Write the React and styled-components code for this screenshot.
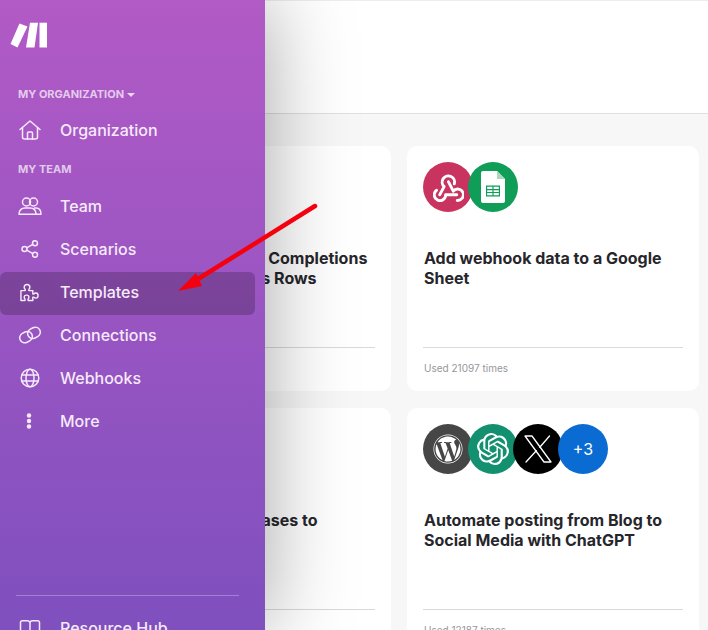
import React from 'react';
import styled, { createGlobalStyle } from 'styled-components';
import { FaWordpress } from 'react-icons/fa6';
import { SiOpenai } from 'react-icons/si';

const Global = createGlobalStyle`
  html, body { margin: 0; padding: 0; height: 100%; overflow: hidden; background: #f7f7f7; }
  * { box-sizing: border-box; }
  body { font-family: Inter, "Liberation Sans", sans-serif; }
`;

const Page = styled.div`
  position: relative;
  width: 708px;
  height: 630px;
  overflow: hidden;
  background: #f7f7f7;
`;

const Sidebar = styled.aside`
  position: absolute;
  left: 0;
  top: 0;
  bottom: 0;
  width: 265px;
  z-index: 2;
  display: flex;
  flex-direction: column;
  overflow: hidden;
  background: linear-gradient(180deg, #b25ac6 0%, #7f50be 100%);
  box-shadow: 0 0 80px rgba(0, 0, 0, 0.36);
  color: #f6eafb;
`;

const LogoBox = styled.div`
  height: 86px;
  padding: 21px 0 0 10px;
  flex-shrink: 0;
`;

const Nav = styled.nav`
  flex: 1;
  min-height: 0;
  display: flex;
  flex-direction: column;
`;

const SectionLabel = styled.div`
  height: 17px;
  line-height: 17px;
  padding-left: 18px;
  margin-top: ${p => p.$before || 0}px;
  margin-bottom: ${p => p.$after || 0}px;
  font-size: 11px;
  font-weight: 700;
  color: rgba(255, 255, 255, 0.7);
  display: flex;
  align-items: center;
  gap: 3px;
`;

const Caret = styled.span`
  width: 0;
  height: 0;
  border-left: 4px solid transparent;
  border-right: 4px solid transparent;
  border-top: 4px solid rgba(255, 255, 255, 0.75);
`;

const Item = styled.a`
  height: 43px;
  width: 255px;
  flex-shrink: 0;
  display: flex;
  align-items: center;
  padding-bottom: 3px;
  border-radius: 6px;
  font-size: 16px;
  font-weight: 500;
  color: #f6eafb;
  background: ${p => (p.$active ? 'rgba(60, 30, 70, 0.32)' : 'transparent')};
`;

const IconSlot = styled.span`
  width: 60px;
  padding-left: 18px;
  flex-shrink: 0;
  display: flex;
  align-items: center;
`;

const Footer = styled.div`
  height: 35px;
  flex-shrink: 0;
  margin: 0 26px 0 16px;
  border-top: 1px solid rgba(255, 255, 255, 0.28);
  padding-top: 12px;
`;

const FooterItem = styled(Item)`
  margin-left: -16px;
`;

const Main = styled.main`
  display: flex;
  flex-direction: column;
  height: 100%;
`;

const Header = styled.header`
  height: 114px;
  flex-shrink: 0;
  background: #fff;
  border-top: 1px solid #eceded;
  border-bottom: 1px solid #dfdfdf;
`;

const Grid = styled.section`
  display: grid;
  grid-template-columns: 292px 292px;
  grid-auto-rows: 245px;
  gap: 17px 16px;
  padding: 32px 0 0 99px;
`;

const Card = styled.article`
  background: #fff;
  border-radius: 10px;
  padding: 16px;
  display: flex;
  flex-direction: column;
`;

const Icons = styled.div`
  display: flex;
  height: 50px;
`;

const Circle = styled.span`
  width: 50px;
  height: 50px;
  border-radius: 50%;
  flex-shrink: 0;
  margin-left: ${p => (p.$first ? 0 : -5)}px;
  display: flex;
  align-items: center;
  justify-content: center;
  background: ${p => p.$bg};
  color: #fff;
  font-size: 16px;
  position: relative;
`;

const Title = styled.h3`
  margin: 36px 0 0;
  padding-left: 1px;
  font-size: 16px;
  line-height: 20px;
  font-weight: 700;
  color: #26262b;
  height: 94px;
  white-space: pre-line;
`;

const Divider = styled.div`
  height: 1px;
  margin-top: 6px;
  background: #d9d9dc;
`;

const Used = styled.div`
  margin-top: 13px;
  padding-left: 1px;
  font-size: 10px;
  line-height: 14px;
  color: #96969b;
`;

const ArrowLayer = styled.svg`
  position: absolute;
  inset: 0;
  z-index: 3;
  pointer-events: none;
`;

const S = { fill: 'none', stroke: 'currentColor', strokeWidth: 1.5, strokeLinecap: 'round', strokeLinejoin: 'round' };

const Logo = () => (
  <svg width="40" height="28" viewBox="10 21 40 28" fill="#fff">
    <polygon points="19.5,23.5 27.5,26.5 17.5,47.5 10.5,44" />
    <polygon points="30,22.7 38,22.7 34.5,47.5 26,47.5" />
    <polygon points="39.5,22.7 47,22.7 47,47.5 39.5,47.5" />
  </svg>
);
const HomeI = () => (
  <svg width="22" height="20" viewBox="0 0 22 20" {...S} style={{ marginLeft: 1 }}>
    <path d="M1 9.5 11 1l10 8.5" />
    <path d="M3.5 7.5V17a2 2 0 0 0 2 2h11a2 2 0 0 0 2-2V7.5" />
    <path d="M8.5 19v-6a1 1 0 0 1 1-1h3a1 1 0 0 1 1 1v6" />
  </svg>
);
const TeamI = () => (
  <svg width="24" height="20" viewBox="0 0 24 20" {...S}>
    <circle cx="8.5" cy="6" r="4" />
    <circle cx="15.5" cy="6" r="4" />
    <path d="M1 18.3c0-4 2.5-6.3 6-6.3h5c3.5 0 6 2.300 6 6.300z" />
    <path d="M16.5 12h1.500c3 0 5 2.300 5 6.300h-5" />
  </svg>
);
const ShareI = () => (
  <svg width="18" height="18" viewBox="0 0 18 18" {...S} style={{ marginLeft: 3 }}>
    <circle cx="3.5" cy="9" r="2.5" />
    <circle cx="14" cy="3.2" r="2.5" />
    <circle cx="14" cy="14.8" r="2.5" />
    <path d="m5.700 7.800 6.100-3.400M5.700 10.200l6.100 3.400" />
  </svg>
);
const PuzzleI = () => (
  <svg width="19" height="19" viewBox="0 0 20 20" {...S} style={{ marginLeft: 2 }}>
    <path d="M1 8h4.500V6.800C4.600 6.200 4.400 5.600 4.400 4.600 4.400 3 5.600 1.500 7.400 1.500s3 1.500 3 3.100c0 1-.3 1.600-1.100 2.200V8h4.200v3.500h1.200c.5-.7 1.100-1 2-1 1.300 0 2.300 1.200 2.300 2.700s-1 2.700-2.300 2.700c-.9 0-1.500-.3-2-1h-1.200v3.500H8.500v-1.500c.6-.5.9-1 .9-1.800 0-1.300-1-2.300-2.500-2.300s-2.500 1-2.500 2.300c0 .8.300 1.300.9 1.800v1.500H1z" />
  </svg>
);
const LinkI = () => (
  <svg width="24" height="18" viewBox="0 0 24 18" {...S}>
    <g transform="rotate(-28 12 9)">
      <rect x="1" y="4" width="13" height="10" rx="5" />
      <rect x="10" y="4" width="13" height="10" rx="5" />
    </g>
  </svg>
);
const GlobeI = () => (
  <svg width="20" height="20" viewBox="0 0 20 20" {...S} style={{ marginLeft: 2 }}>
    <circle cx="10" cy="10" r="8.800" />
    <ellipse cx="10" cy="10" rx="4" ry="8.800" />
    <path d="M1.800 7h16.400M1.800 13h16.400" />
  </svg>
);
const DotsI = () => (
  <svg width="6" height="16" viewBox="0 0 6 16" fill="currentColor" style={{ marginLeft: 8 }}>
    <circle cx="3" cy="2.500" r="2.200" />
    <circle cx="3" cy="8" r="2.200" />
    <circle cx="3" cy="13.500" r="2.200" />
  </svg>
);
const BookI = () => (
  <svg width="22" height="20" viewBox="0 0 22 20" {...S} style={{ marginLeft: 1, marginTop: 2 }}>
    <path d="M11 4C11 2.800 9.800 1.800 8.500 1.800H3.200A1.700 1.700 0 0 0 1.500 3.500V17h7c1.300 0 2.500.8 2.500 2 0-1.200 1.200-2 2.500-2h7V3.500a1.700 1.700 0 0 0-1.700-1.700h-5.300C12.200 1.800 11 2.800 11 4zM11 4v15" />
  </svg>
);

const WebhookI = () => (
  <svg width="31" height="29" viewBox="0 0 30 28" fill="none" stroke="#fff" strokeWidth="2.800" strokeLinecap="round" strokeLinejoin="round">
    <path d="M6.500 21 10.800 13.200A6 6 0 1 1 20.600 10.500" />
    <path d="M15 8.500 19.600 17.600A5.500 5.500 0 1 1 23.500 26.500" />
    <path d="M23 21H12.200A5.500 5.500 0 1 1 3.500 16.700" />
  </svg>
);

const SheetsI = () => (
  <svg width="24" height="32" viewBox="0 0 24 32">
    <path d="M2 0h14l8 8v22a2 2 0 0 1-2 2H2a2 2 0 0 1-2-2V2a2 2 0 0 1 2-2z" fill="#fff" />
    <path d="M16 0l8 8h-8z" fill="#a9d8bd" />
    <rect x="5" y="14.500" width="14" height="11" fill="#0f9d58" />
    <path d="M6.200 15.800h5.200v2.300H6.200zM12.600 15.800h5.200v2.300h-5.200zM6.200 19.200h5.200v1.800H6.200zM12.600 19.200h5.200v1.800h-5.200zM6.200 22.100h5.200v2.200H6.200zM12.600 22.100h5.200v2.200h-5.200z" fill="#fff" />
  </svg>
);

const XI = () => (
  <svg width="28" height="28" viewBox="0 0 28 28" fill="none" stroke="#fff" strokeWidth="1.300" strokeLinecap="round" strokeLinejoin="round">
    <polygon points="1,1 8,1 27,27 20,27" />
    <path d="M25.500 1 15.800 12.200M12.300 15.800 2 27" />
  </svg>
);

const cards = [
  { title: 'Compose ChatGPT Completions from Google Sheets Rows', used: 'Used 18452 times', icons: [] },
  { title: 'Add webhook data to a Google Sheet', used: 'Used 21097 times', icons: [
    { bg: '#c8345f', node: <WebhookI /> },
    { bg: '#0f9d58', node: <SheetsI /> },
  ] },
  { title: 'Sync PayPal Purchases to\nGoogle Sheets', used: 'Used 14230 times', icons: [] },
  { title: 'Automate posting from Blog to Social Media with ChatGPT', used: 'Used 12187 times', icons: [
    { bg: '#464646', node: <FaWordpress size={30} /> },
    { bg: '#13906f', node: <SiOpenai size={32} /> },
    { bg: '#000', node: <XI /> },
    { bg: '#0a6cd2', node: '+3' },
  ] },
];

const NavRow = ({ icon, label, active }) => (
  <Item $active={active}><IconSlot>{icon}</IconSlot>{label}</Item>
);

export default function App() {
  return (
    <Page>
      <Global />
      <Main>
        <Header />
        <Grid>
          {cards.map(c => (
            <Card key={c.title}>
              <Icons>
                {c.icons.map((ic, i) => (
                  <Circle key={i} $first={i === 0} $bg={ic.bg}>{ic.node}</Circle>
                ))}
              </Icons>
              <Title>{c.title}</Title>
              <Divider />
              <Used>{c.used}</Used>
            </Card>
          ))}
        </Grid>
      </Main>
      <Sidebar>
        <LogoBox><Logo /></LogoBox>
        <Nav>
          <SectionLabel $after={7}>MY ORGANIZATION <Caret /></SectionLabel>
          <NavRow icon={<HomeI />} label="Organization" />
          <SectionLabel $before={8} $after={8}>MY TEAM</SectionLabel>
          <NavRow icon={<TeamI />} label="Team" />
          <NavRow icon={<ShareI />} label="Scenarios" />
          <NavRow icon={<PuzzleI />} label="Templates" active />
          <NavRow icon={<LinkI />} label="Connections" />
          <NavRow icon={<GlobeI />} label="Webhooks" />
          <NavRow icon={<DotsI />} label="More" />
        </Nav>
        <Footer>
          <FooterItem><IconSlot><BookI /></IconSlot>Resource Hub</FooterItem>
        </Footer>
      </Sidebar>
      <ArrowLayer width="708" height="630" viewBox="0 0 708 630">
        <path d="M315 206 198 279" stroke="#f5000f" strokeWidth="4.500" strokeLinecap="round" fill="none" />
        <polygon points="178,291 196,273 202,286" fill="#f5000f" />
      </ArrowLayer>
    </Page>
  );
}
